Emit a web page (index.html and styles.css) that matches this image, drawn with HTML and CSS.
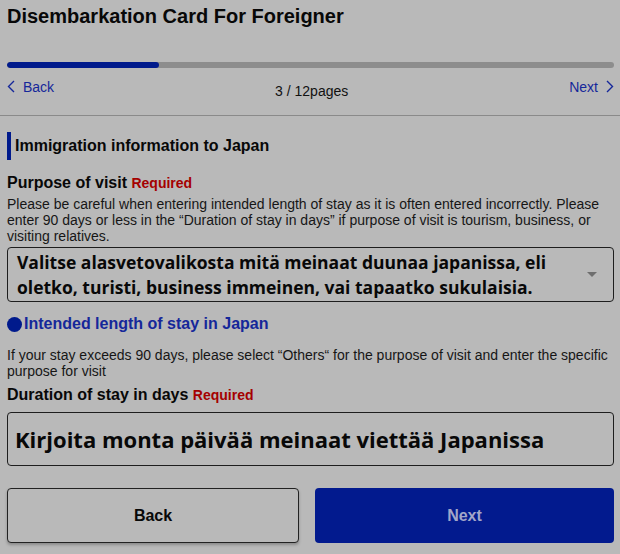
FILE: index.html
```html
<!DOCTYPE html>
<html lang="en">
<head>
<meta charset="utf-8">
<title>Disembarkation Card For Foreigner</title>
<link rel="stylesheet" href="styles.css">
</head>
<body>
<header class="top">
  <h1 class="title">Disembarkation Card For Foreigner</h1>
  <div class="progress"><div class="progress-fill" style="width:25%"></div></div>
  <nav class="pager">
    <a class="pager-link pager-back" href="#">
      <svg class="chev" width="8" height="13" viewBox="0 0 8 13"><polyline points="7,1 1.5,6.5 7,12" fill="none" stroke="currentColor" stroke-width="1.4"/></svg>
      <span>Back</span>
    </a>
    <span class="pager-count">3 / 12pages</span>
    <a class="pager-link pager-next" href="#">
      <span>Next</span>
      <svg class="chev" width="8" height="13" viewBox="0 0 8 13"><polyline points="1,1 6.5,6.5 1,12" fill="none" stroke="currentColor" stroke-width="1.4"/></svg>
    </a>
  </nav>
</header>
<hr class="divider">
<main class="form">
  <h2 class="section-title">Immigration information to Japan</h2>

  <div class="field-label">Purpose of visit <span class="required">Required</span></div>
  <p class="help">Please be careful when entering intended length of stay as it is often entered incorrectly. Please enter 90 days or less in the “Duration of stay in days” if purpose of visit is tourism, business, or visiting relatives.</p>
  <div class="select">
    <span class="select-text">Valitse alasvetovalikosta mitä meinaat duunaa japanissa, eli oletko, turisti, business immeinen, vai tapaatko sukulaisia.</span>
    <span class="select-arrow"></span>
  </div>

  <h3 class="sub-title"><span class="dot"></span>Intended length of stay in Japan</h3>
  <p class="help help-2">If your stay exceeds 90 days, please select “Others“ for the purpose of visit and enter the specific purpose for visit</p>

  <div class="field-label field-label-2">Duration of stay in days <span class="required">Required</span></div>
  <div class="input">Kirjoita monta päivää meinaat viettää Japanissa</div>

  <div class="actions">
    <button class="btn btn-back" type="button">Back</button>
    <button class="btn btn-next" type="button">Next</button>
  </div>
</main>
</body>
</html>
```

FILE: styles.css
```css
html, body {
  margin: 0;
  padding: 0;
  background: #b9b9b9;
}
body {
  font-family: "Liberation Sans", Arial, sans-serif;
  color: #0d0d0d;
  width: 620px;
  height: 554px;
  overflow: hidden;
}
.top {
  padding: 5px 6px 0 7px;
}
.title {
  margin: 0;
  font-size: 20px;
  line-height: 23px;
  font-weight: bold;
  color: #080808;
}
.progress {
  margin-top: 34px;
  height: 6px;
  border-radius: 3px;
  background: #8d8d8d;
  overflow: hidden;
}
.progress-fill {
  height: 100%;
  background: #001a8c;
  border-radius: 3px;
}
.pager {
  margin-top: 11px;
  display: flex;
  justify-content: space-between;
  align-items: flex-start;
  height: 19px;
}
.pager-link {
  display: flex;
  align-items: center;
  gap: 8px;
  color: #15279a;
  text-decoration: none;
  font-size: 14px;
  line-height: 16px;
}
.chev {
  display: block;
  margin-top: -2px;
}
.pager-count {
  font-size: 14px;
  line-height: 16px;
  padding-top: 4px;
  color: #111;
}
.divider {
  margin: 17px 0 0;
  border: 0;
  height: 1px;
  background: #8a8a8a;
}
.form {
  padding: 0 6px 0 7px;
}
.section-title {
  margin: 16px 0 0;
  font-size: 16px;
  line-height: 28px;
  font-weight: bold;
  border-left: 4px solid #001a8c;
  padding-left: 4px;
  color: #080808;
}
.field-label {
  margin-top: 13px;
  font-size: 16px;
  line-height: 20px;
  font-weight: bold;
  color: #080808;
}
.required {
  font-size: 14px;
  color: #a50000;
  font-weight: bold;
}
.help {
  margin: 3px 0 0;
  font-size: 14px;
  line-height: 16px;
  color: #161616;
}
.select {
  margin-top: 3px;
  height: 55px;
  box-sizing: border-box;
  border: 1.5px solid #1e1e1e;
  border-radius: 4px;
  display: flex;
  align-items: center;
  padding: 0 16px 0 9px;
  gap: 10px;
}
.select-text {
  flex: 1;
  font-family: "Open Sans", "Noto Sans", sans-serif;
  font-weight: bold;
  font-size: 17.5px;
  line-height: 25px;
  color: #080808;
}
.select-arrow {
  width: 0;
  height: 0;
  border-left: 5px solid transparent;
  border-right: 5px solid transparent;
  border-top: 5px solid #6e6e6e;
}
.sub-title {
  margin: 12px 0 0;
  display: flex;
  align-items: center;
  gap: 2px;
  font-size: 16px;
  line-height: 20px;
  font-weight: bold;
  color: #15279a;
}
.dot {
  width: 15px;
  height: 15px;
  border-radius: 50%;
  background: #001a8c;
}
.help-2 {
  margin-top: 13px;
}
.field-label-2 {
  margin-top: 6px;
}
.input {
  margin-top: 7px;
  height: 54px;
  box-sizing: border-box;
  border: 1.5px solid #1e1e1e;
  border-radius: 4px;
  display: flex;
  align-items: center;
  padding: 0 7px;
  font-family: "Open Sans", "Noto Sans", sans-serif;
  font-weight: bold;
  font-size: 22px;
  color: #080808;
}
.actions {
  margin-top: 22px;
  display: grid;
  grid-template-columns: 292px 1fr;
  gap: 16px;
}
.btn {
  height: 55px;
  border-radius: 4px;
  font-family: "Liberation Sans", Arial, sans-serif;
  font-size: 16px;
  font-weight: bold;
  cursor: pointer;
}
.btn-back {
  background: #b9b9b9;
  border: 1.5px solid #222;
  color: #080808;
  box-shadow: 0 2px 3px rgba(0, 0, 0, 0.25);
}
.btn-next {
  background: #021a8e;
  border: 0;
  color: #a2a6c9;
}
```
